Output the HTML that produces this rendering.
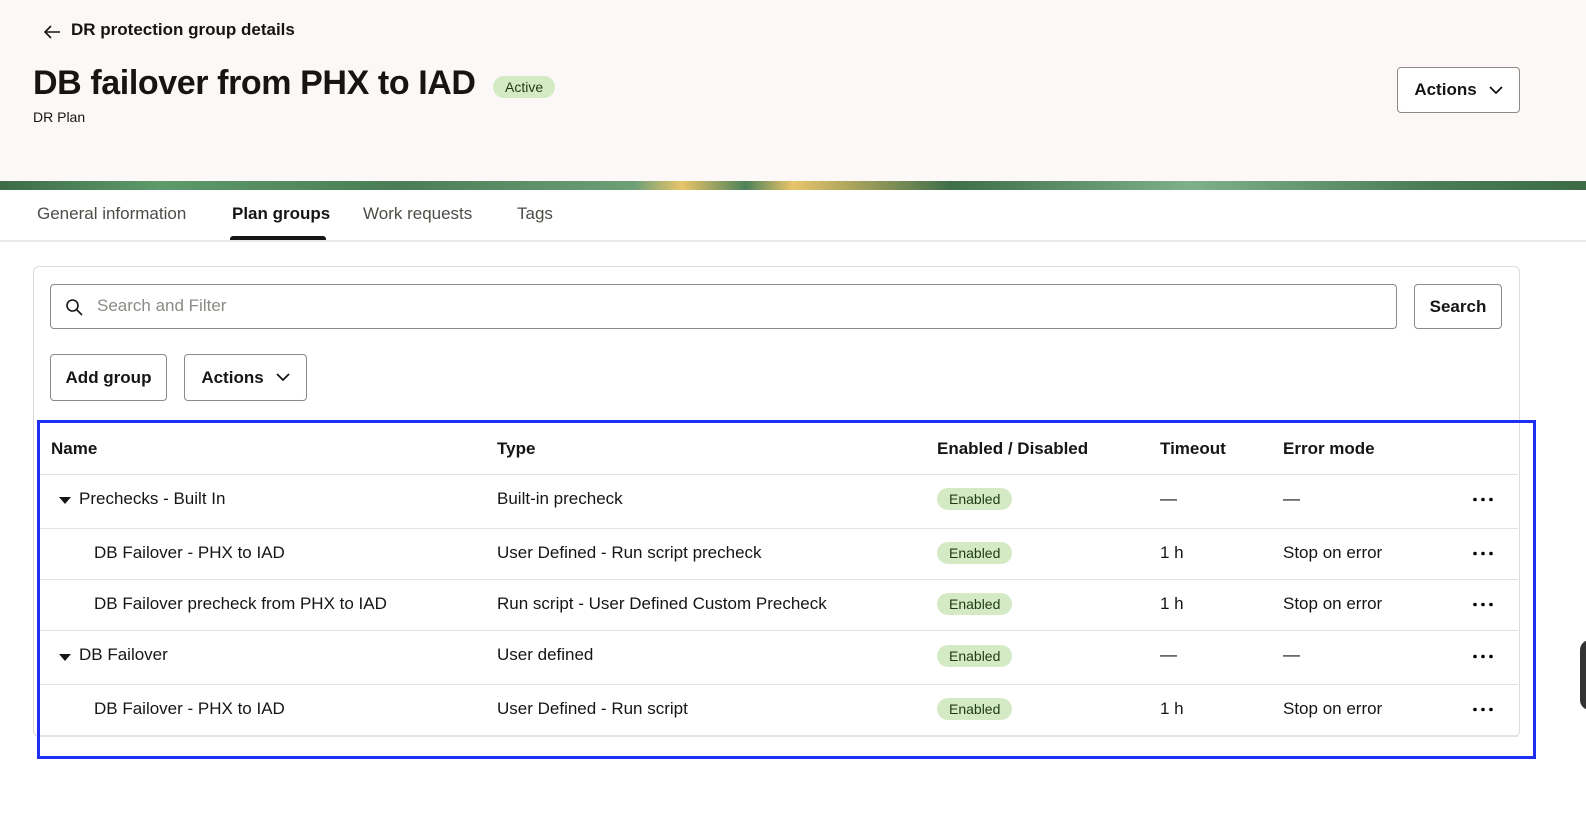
<!DOCTYPE html><html><head><style>
*{box-sizing:border-box;margin:0;padding:0}
body{width:1586px;height:823px;background:#fff;font-family:"Liberation Sans",sans-serif;color:#161513;position:relative;overflow:hidden;font-size:16px}
.hdr{position:absolute;left:0;top:0;width:1586px;height:181px;background:#fcf8f7}
.strip{position:absolute;left:0;top:181px;width:1586px;height:9px;background:linear-gradient(90deg,#3d6b48 0,#5e9a6a 10%,#4a7d55 25%,#6ea078 40%,#e9c46a 43%,#4d8259 47%,#e9c46a 50%,#3f6e4a 60%,#7fb08a 75%,#4a7d55 90%,#3d6b48 100%)}
.abs{position:absolute;white-space:nowrap}
.btn{position:absolute;border:1px solid #8d8a86;border-radius:4px;background:#fff;font-weight:bold;font-size:17px;display:flex;align-items:center;justify-content:center;gap:12px}
.badge{position:absolute;background:#d4eac4;border-radius:12px;font-size:14px;padding:3px 12px;color:#1f3b18}
.tab{position:absolute;top:204px;font-size:17px;color:#4f4c48}
.card{position:absolute;left:33px;top:266px;width:1487px;height:471px;border:1px solid #dedbd8;border-radius:6px}
.line{position:absolute;left:39px;width:1479px;height:1px;background:#e4e1de}
.cell{position:absolute;font-size:17px;white-space:nowrap}
.dots{position:absolute;left:1473px}
</style></head><body>
<div class="hdr"></div><div class="strip"></div>
<svg class="abs" style="left:42px;top:24px" width="20" height="16" viewBox="0 0 20 16"><path d="M18 8H3M9 2L3 8l6 6" fill="none" stroke="#161513" stroke-width="1.6"/></svg>
<div class="abs" style="left:71px;top:20px;font-size:17px;font-weight:bold">DR protection group details</div>
<div class="abs" style="left:33px;top:64px;font-size:34px;font-weight:bold;letter-spacing:-0.4px">DB failover from PHX to IAD</div>
<div class="badge" style="left:493px;top:76px;font-size:14px">Active</div>
<div class="abs" style="left:33px;top:109px;font-size:14px">DR Plan</div>
<div class="btn" style="left:1397px;top:67px;width:123px;height:46px">Actions <svg width="14" height="9" viewBox="0 0 14 9"><path d="M1 1l6 6 6-6" fill="none" stroke="#161513" stroke-width="1.8"/></svg></div>
<div class="tab" style="left:37px">General information</div>
<div class="tab" style="left:232px;color:#161513;font-weight:bold">Plan groups</div>
<div style="position:absolute;left:230px;top:236px;width:96px;height:4px;background:#161513;border-radius:3px 3px 0 0"></div>
<div class="tab" style="left:363px">Work requests</div>
<div class="tab" style="left:517px">Tags</div>
<div style="position:absolute;left:0;top:240px;width:1586px;height:2px;background:#ebe9e6"></div>
<div class="card"></div>
<div style="position:absolute;left:50px;top:284px;width:1347px;height:45px;border:1px solid #8d8a86;border-radius:4px"></div>
<svg class="abs" style="left:65px;top:298px" width="18" height="18" viewBox="0 0 18 18"><circle cx="7.5" cy="7.5" r="5.5" fill="none" stroke="#161513" stroke-width="1.6"/><path d="M11.5 11.5L17 17" stroke="#161513" stroke-width="1.6"/></svg>
<div class="abs" style="left:97px;top:296px;font-size:17px;color:#8d8a86">Search and Filter</div>
<div class="btn" style="left:1414px;top:284px;width:88px;height:45px">Search</div>
<div class="btn" style="left:50px;top:354px;width:117px;height:47px">Add group</div>
<div class="btn" style="left:184px;top:354px;width:123px;height:47px">Actions <svg width="14" height="9" viewBox="0 0 14 9"><path d="M1 1l6 6 6-6" fill="none" stroke="#161513" stroke-width="1.8"/></svg></div>
<div class="line" style="top:474px"></div><div class="line" style="top:528px"></div><div class="line" style="top:579px"></div><div class="line" style="top:630px"></div><div class="line" style="top:684px"></div><div class="line" style="top:735px;height:2px"></div>
<div class="cell" style="left:51px;top:439px;font-weight:bold">Name</div>
<div class="cell" style="left:497px;top:439px;font-weight:bold">Type</div>
<div class="cell" style="left:937px;top:439px;font-weight:bold">Enabled / Disabled</div>
<div class="cell" style="left:1160px;top:439px;font-weight:bold">Timeout</div>
<div class="cell" style="left:1283px;top:439px;font-weight:bold">Error mode</div>

<svg class="abs" style="left:59px;top:497px" width="12" height="7"><path d="M0 0h12L6 7z" fill="#161513"/></svg>
<div class="cell" style="left:79px;top:489px">Prechecks - Built In</div>
<div class="cell" style="left:497px;top:489px">Built-in precheck</div>
<div class="badge" style="left:937px;top:488px">Enabled</div>
<div class="cell" style="left:1160px;top:489px">—</div><div class="cell" style="left:1283px;top:489px">—</div>
<svg class="dots" style="top:497px" width="20" height="5"><circle cx="2" cy="2.5" r="1.8"/><circle cx="10" cy="2.5" r="1.8"/><circle cx="18" cy="2.5" r="1.8"/></svg>

<div class="cell" style="left:94px;top:543px">DB Failover - PHX to IAD</div>
<div class="cell" style="left:497px;top:543px">User Defined - Run script precheck</div>
<div class="badge" style="left:937px;top:542px">Enabled</div>
<div class="cell" style="left:1160px;top:543px">1 h</div><div class="cell" style="left:1283px;top:543px">Stop on error</div>
<svg class="dots" style="top:551px" width="20" height="5"><circle cx="2" cy="2.5" r="1.8"/><circle cx="10" cy="2.5" r="1.8"/><circle cx="18" cy="2.5" r="1.8"/></svg>

<div class="cell" style="left:94px;top:594px">DB Failover precheck from PHX to IAD</div>
<div class="cell" style="left:497px;top:594px">Run script - User Defined Custom Precheck</div>
<div class="badge" style="left:937px;top:593px">Enabled</div>
<div class="cell" style="left:1160px;top:594px">1 h</div><div class="cell" style="left:1283px;top:594px">Stop on error</div>
<svg class="dots" style="top:602px" width="20" height="5"><circle cx="2" cy="2.5" r="1.8"/><circle cx="10" cy="2.5" r="1.8"/><circle cx="18" cy="2.5" r="1.8"/></svg>

<svg class="abs" style="left:59px;top:654px" width="12" height="7"><path d="M0 0h12L6 7z" fill="#161513"/></svg>
<div class="cell" style="left:79px;top:645px">DB Failover</div>
<div class="cell" style="left:497px;top:645px">User defined</div>
<div class="badge" style="left:937px;top:645px">Enabled</div>
<div class="cell" style="left:1160px;top:645px">—</div><div class="cell" style="left:1283px;top:645px">—</div>
<svg class="dots" style="top:654px" width="20" height="5"><circle cx="2" cy="2.5" r="1.8"/><circle cx="10" cy="2.5" r="1.8"/><circle cx="18" cy="2.5" r="1.8"/></svg>

<div class="cell" style="left:94px;top:699px">DB Failover - PHX to IAD</div>
<div class="cell" style="left:497px;top:699px">User Defined - Run script</div>
<div class="badge" style="left:937px;top:698px">Enabled</div>
<div class="cell" style="left:1160px;top:699px">1 h</div><div class="cell" style="left:1283px;top:699px">Stop on error</div>
<svg class="dots" style="top:707px" width="20" height="5"><circle cx="2" cy="2.5" r="1.8"/><circle cx="10" cy="2.5" r="1.8"/><circle cx="18" cy="2.5" r="1.8"/></svg>

<div style="position:absolute;left:37px;top:420px;width:1499px;height:339px;border:3px solid #1f2ef5"></div>
<div style="position:absolute;left:1580px;top:640px;width:30px;height:70px;background:#333;border-radius:10px"></div>
</body></html>
